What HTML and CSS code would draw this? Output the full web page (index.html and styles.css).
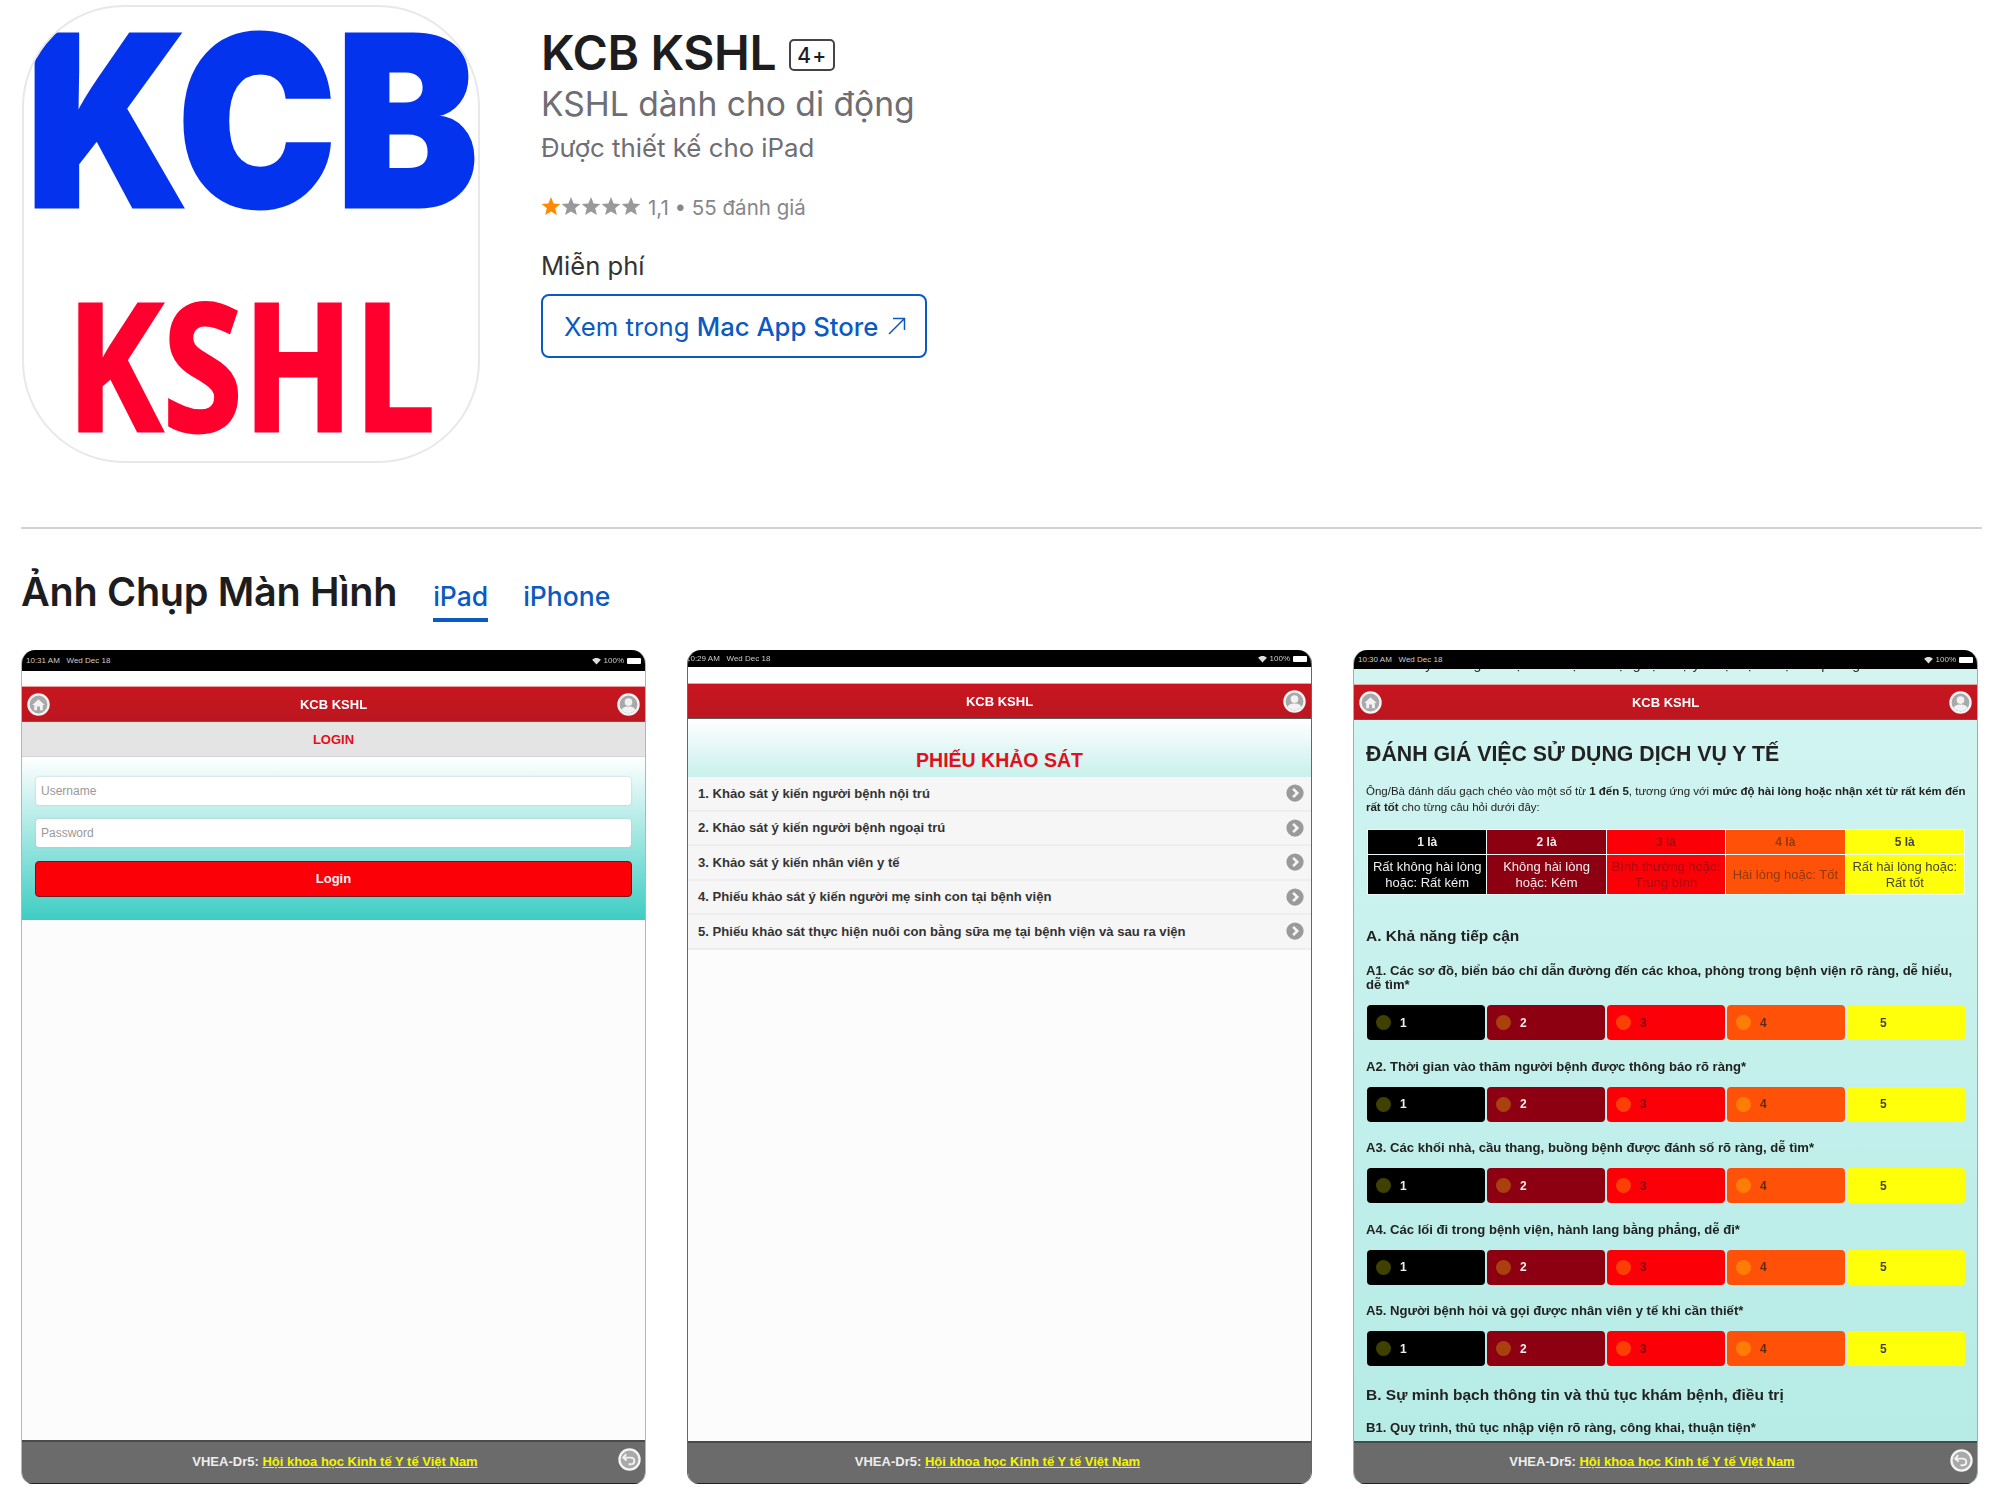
FILE: index.html
```html
<!DOCTYPE html>
<html lang="vi">
<head>
    <meta charset="UTF-8">
    <title>KCB KSHL</title>
    <link rel="stylesheet" href="styles.css">
</head>
<body>
    <svg class="sprites" width="0" height="0">
        <symbol id="star" viewBox="0 0 20 20"><polygon points="10,1 12.6,7.4 19.4,7.9 14.2,12.3 15.9,19 10,15.4 4.1,19 5.8,12.3 .6,7.9 7.4,7.4"/></symbol>
        <symbol id="i-home" viewBox="0 0 24 24"><circle cx="12" cy="12" r="10.5" fill="#a9a9a9" stroke="#f4f4f4" stroke-width="2.4"/><path d="M5.5 12.5 12 6.5l6.5 6h-2v5.5h-3v-4h-3v4h-3v-5.5z" fill="#f2f2f2"/></symbol>
        <symbol id="i-user" viewBox="0 0 24 24"><circle cx="12" cy="12" r="10.5" fill="#a9a9a9" stroke="#f4f4f4" stroke-width="2.4"/><circle cx="12" cy="9.5" r="4" fill="#f2f2f2"/><path d="M4.5 17.5c2-3 5-3.5 7.5-3.5s5.5.5 7.5 3.5c-2 2.5-5 3.5-7.5 3.5s-5.5-1-7.5-3.5z" fill="#f2f2f2"/></symbol>
        <symbol id="i-back" viewBox="0 0 24 24"><circle cx="12" cy="12" r="10.5" fill="#a9a9a9" stroke="#f4f4f4" stroke-width="2.4"/><path d="M8.5 6.5 5.5 10l3.5 3M6 10h7c2.5 0 4 1.5 4 3.500S15.500 17 13 17h-2" fill="none" stroke="#f2f2f2" stroke-width="2"/></symbol>
        <symbol id="i-next" viewBox="0 0 24 24"><circle cx="12" cy="12" r="11.5" fill="#9a9a9a"/><path d="M9.5 6.5 15 12l-5.5 5.5" fill="none" stroke="#f4f4f4" stroke-width="3.5"/></symbol>
        <symbol id="i-wifi" viewBox="0 0 11 10"><path d="M0 3.5c3-3 8-3 11 0L5.5 9.5z" fill="#ddd"/></symbol>
    </svg>

    <div class="page">
        <header class="product">
            <svg class="app-icon" viewBox="0 0 458 458" role="img">
                <text class="logo-top" x="2" y="202" textLength="456" lengthAdjust="spacingAndGlyphs">KCB</text>
                <text class="logo-bottom" x="43" y="428" textLength="372" lengthAdjust="spacingAndGlyphs">KSHL</text>
            </svg>
            <div class="product-info">
                <h1 class="app-title">KCB KSHL <span class="age">4+</span></h1>
                <p class="app-sub">KSHL dành cho di động</p>
                <p class="app-device">Được thiết kế cho iPad</p>
                <div class="rating">
                    <span class="stars">
                        <svg class="star on"><use href="#star"/></svg>
                        <svg class="star"><use href="#star"/></svg>
                        <svg class="star"><use href="#star"/></svg>
                        <svg class="star"><use href="#star"/></svg>
                        <svg class="star"><use href="#star"/></svg>
                    </span>
                    <span>1,1 • 55 đánh giá</span>
                </div>
                <p class="price">Miễn phí</p>
                <a class="store-btn" href="#"><span>Xem trong <span class="store-name">Mac App Store</span></span>
                    <svg class="store-arrow" viewBox="0 0 20 20"><path d="M2 18 17 3M6 2.5h11.5V14" fill="none" stroke="currentColor" stroke-width="1.5"/></svg>
                </a>
            </div>
        </header>

        <section class="shots">
            <div class="shots-head">
                <h2>Ảnh Chụp Màn Hình</h2>
                <a class="tab active" href="#">iPad</a>
                <a class="tab" href="#">iPhone</a>
            </div>

            <div class="shot-grid">
                <!-- login -->
                <div class="shot shot-login">
                    <div class="status"><span>10:31 AM &nbsp; Wed Dec 18</span><span class="status-right"><svg class="wifi"><use href="#i-wifi"/></svg>100%<i class="battery"></i></span></div>
                    <div class="gap"></div>
                    <div class="bar"><svg class="round"><use href="#i-home"/></svg><b>KCB KSHL</b><svg class="round"><use href="#i-user"/></svg></div>
                    <div class="login-title">LOGIN</div>
                    <div class="login-form">
                        <div class="field">Username</div>
                        <div class="field">Password</div>
                        <div class="login-btn">Login</div>
                    </div>
                    <div class="blank"></div>
                    <div class="foot"><span>VHEA-Dr5: <u>Hội khoa học Kinh tế Y tế Việt Nam</u></span><svg class="round"><use href="#i-back"/></svg></div>
                </div>

                <!-- survey list -->
                <div class="shot shot-list">
                    <div class="status status-short"><span>10:29 AM &nbsp; Wed Dec 18</span><span class="status-right"><svg class="wifi"><use href="#i-wifi"/></svg>100%<i class="battery"></i></span></div>
                    <div class="gap gap-list"></div>
                    <div class="bar"><span class="round"></span><b>KCB KSHL</b><svg class="round"><use href="#i-user"/></svg></div>
                    <div class="list-title">PHIẾU KHẢO SÁT</div>
                    <ul class="survey-list">
                        <li>1. Khảo sát ý kiến người bệnh nội trú<svg class="next"><use href="#i-next"/></svg></li>
                        <li>2. Khảo sát ý kiến người bệnh ngoại trú<svg class="next"><use href="#i-next"/></svg></li>
                        <li>3. Khảo sát ý kiến nhân viên y tế<svg class="next"><use href="#i-next"/></svg></li>
                        <li>4. Phiếu khảo sát ý kiến người mẹ sinh con tại bệnh viện<svg class="next"><use href="#i-next"/></svg></li>
                        <li>5. Phiếu khảo sát thực hiện nuôi con bằng sữa mẹ tại bệnh viện và sau ra viện<svg class="next"><use href="#i-next"/></svg></li>
                    </ul>
                    <div class="blank"></div>
                    <div class="foot foot-short"><span>VHEA-Dr5: <u>Hội khoa học Kinh tế Y tế Việt Nam</u></span></div>
                </div>

                <!-- questionnaire -->
                <div class="shot shot-form">
                    <div class="status status-tall"><span>10:30 AM &nbsp; Wed Dec 18</span><span class="status-right"><svg class="wifi"><use href="#i-wifi"/></svg>100%<i class="battery"></i></span></div>
                    <div class="gap gap-clip"><span>Khảo sát ý kiến người bệnh về việc sử dụng dịch vụ y tế tại bệnh viện và phòng khám</span></div>
                    <div class="bar"><svg class="round"><use href="#i-home"/></svg><b>KCB KSHL</b><svg class="round"><use href="#i-user"/></svg></div>
                    <div class="form-body">
                        <h3 class="form-title">ĐÁNH GIÁ VIỆC SỬ DỤNG DỊCH VỤ Y TẾ</h3>
                        <p class="form-note">Ông/Bà đánh dấu gạch chéo vào một số từ <b>1 đến 5</b>, tương ứng với <b>mức độ hài lòng hoặc nhận xét từ rất kém đến</b><br><b>rất tốt</b> cho từng câu hỏi dưới đây:</p>
                        <table class="scale">
                            <tr class="scale-head">
                                <th class="c1">1 là</th><th class="c2">2 là</th><th class="c3">3 là</th><th class="c4">4 là</th><th class="c5">5 là</th>
                            </tr>
                            <tr>
                                <td class="c1">Rất không hài lòng hoặc: Rất kém</td>
                                <td class="c2">Không hài lòng hoặc: Kém</td>
                                <td class="c3">Bình thường hoặc: Trung bình</td>
                                <td class="c4">Hài lòng hoặc: Tốt</td>
                                <td class="c5">Rất hài lòng hoặc: Rất tốt</td>
                            </tr>
                        </table>

                        <h4 class="group">A. Khả năng tiếp cận</h4>
                        <p class="q q-first">A1. Các sơ đồ, biển báo chỉ dẫn đường đến các khoa, phòng trong bệnh viện rõ ràng, dễ hiểu, dễ tìm*</p>
                        <div class="opts">
                            <div class="opt c1"><i></i>1</div><div class="opt c2"><i></i>2</div><div class="opt c3"><i></i>3</div><div class="opt c4"><i></i>4</div><div class="opt c5"><i></i>5</div>
                        </div>
                        <p class="q">A2. Thời gian vào thăm người bệnh được thông báo rõ ràng*</p>
                        <div class="opts">
                            <div class="opt c1"><i></i>1</div><div class="opt c2"><i></i>2</div><div class="opt c3"><i></i>3</div><div class="opt c4"><i></i>4</div><div class="opt c5"><i></i>5</div>
                        </div>
                        <p class="q">A3. Các khối nhà, cầu thang, buồng bệnh được đánh số rõ ràng, dễ tìm*</p>
                        <div class="opts">
                            <div class="opt c1"><i></i>1</div><div class="opt c2"><i></i>2</div><div class="opt c3"><i></i>3</div><div class="opt c4"><i></i>4</div><div class="opt c5"><i></i>5</div>
                        </div>
                        <p class="q">A4. Các lối đi trong bệnh viện, hành lang bằng phẳng, dễ đi*</p>
                        <div class="opts">
                            <div class="opt c1"><i></i>1</div><div class="opt c2"><i></i>2</div><div class="opt c3"><i></i>3</div><div class="opt c4"><i></i>4</div><div class="opt c5"><i></i>5</div>
                        </div>
                        <p class="q">A5. Người bệnh hỏi và gọi được nhân viên y tế khi cần thiết*</p>
                        <div class="opts">
                            <div class="opt c1"><i></i>1</div><div class="opt c2"><i></i>2</div><div class="opt c3"><i></i>3</div><div class="opt c4"><i></i>4</div><div class="opt c5"><i></i>5</div>
                        </div>

                        <h4 class="group group-b">B. Sự minh bạch thông tin và thủ tục khám bệnh, điều trị</h4>
                        <p class="q q-b">B1. Quy trình, thủ tục nhập viện rõ ràng, công khai, thuận tiện*</p>
                    </div>
                    <div class="foot foot-short"><span>VHEA-Dr5: <u>Hội khoa học Kinh tế Y tế Việt Nam</u></span><svg class="round"><use href="#i-back"/></svg></div>
                </div>
            </div>
        </section>
    </div>
</body>
</html>
```

FILE: styles.css
```css
body {
    font-family: Inter, "Noto Sans", sans-serif;
    background-color: #fff;
    color: #1d1d1f;
    margin: 0;
    padding: 0;
}
h1, h2, h3, h4, p, ul {
    margin: 0;
    padding: 0;
}
a {
    text-decoration: none;
}
.sprites {
    display: block;
    height: 0;
}
.page {
    width: 1961px;
    margin-left: 21px;
    height: 1502px;
    overflow: hidden;
}

/* product header */
.product {
    display: flex;
    height: 522px;
    border-bottom: 2px solid #d2d2d2;
    padding-top: 5px;
}
.app-icon {
    width: 458px;
    height: 458px;
    margin-left: 1px;
    border: 2px solid #e8e8e8;
    border-radius: 102px;
    box-sizing: border-box;
    flex-shrink: 0;
    overflow: hidden;
}
.logo-top {
    font-family: Inter, sans-serif;
    font-weight: 900;
    font-size: 240px;
    fill: #0433ee;
    stroke: #0433ee;
    stroke-width: 3px;
}
.logo-bottom {
    font-family: "Open Sans", sans-serif;
    font-weight: 700;
    font-size: 180px;
    fill: #ff002e;
    stroke: #ff002e;
    stroke-width: 3px;
}
.product-info {
    margin-left: 61px;
}
.app-title {
    display: flex;
    align-items: center;
    font-size: 48px;
    font-weight: 600;
    line-height: 60px;
    margin-top: 18px;
    letter-spacing: -.4px;
}
.age {
    font-size: 21px;
    font-weight: 500;
    letter-spacing: 1px;
    border: 2px solid #444;
    border-radius: 5px;
    width: 46px;
    height: 32px;
    line-height: 30px;
    text-align: center;
    box-sizing: border-box;
    margin-left: 13px;
    margin-top: 4px;
}
.app-sub {
    font-size: 33.6px;
    font-weight: 400;
    line-height: 44px;
    color: #6e6e73;
    margin-top: -1px;
}
.app-device {
    font-size: 25.8px;
    line-height: 36px;
    color: #6e6e73;
    margin-top: 4px;
}
.rating {
    display: flex;
    align-items: center;
    gap: 7px;
    font-size: 20.5px;
    line-height: 28px;
    color: #86868b;
    margin-top: 28px;
}
.stars {
    display: flex;
    margin-top: -4px;
}
.star {
    width: 20px;
    height: 20px;
    fill: #98989d;
}
.star.on {
    fill: #ff8a00;
}
.price {
    font-size: 25.6px;
    line-height: 36px;
    margin-top: 26px;
    color: #333;
}
.store-btn {
    display: flex;
    align-items: center;
    gap: 9px;
    width: 386px;
    height: 64px;
    margin-top: 10px;
    padding-left: 21px;
    border: 2px solid #0a5ac2;
    border-radius: 8px;
    box-sizing: border-box;
    font-size: 25.7px;
    color: #0a5ac2;
}
.store-name {
    font-weight: 500;
}
.store-arrow {
    width: 20px;
    height: 20px;
}

/* screenshots */
.shots-head {
    display: flex;
    align-items: baseline;
    height: 121px;
    padding-top: 34px;
    box-sizing: border-box;
}
.shots-head h2 {
    font-size: 39.6px;
    font-weight: 600;
    line-height: 58px;
    letter-spacing: -.3px;
    margin-right: 36px;
}
.tab {
    font-size: 26.5px;
    font-weight: 500;
    color: #0a5ac2;
    margin-right: 35px;
    padding-bottom: 6px;
}
.tab.active {
    border-bottom: 4px solid #0a5ac2;
}
.shot-grid {
    display: grid;
    grid-template-columns: 625px 625px 625px;
    column-gap: 41px;
}
.shot {
    display: flex;
    flex-direction: column;
    height: 834px;
    border-radius: 14px 14px 12px 12px;
    border-left: 1px solid #b5b5b5;
    border-right: 1px solid #b5b5b5;
    box-sizing: border-box;
    overflow: hidden;
    font-family: "Liberation Sans", Arial, sans-serif;
    filter: blur(.4px);
}
.status {
    display: flex;
    justify-content: space-between;
    align-items: center;
    height: 21px;
    flex-shrink: 0;
    padding: 0 4px;
    background-color: #000;
    color: #ccc;
    font-size: 8px;
}
.status-short {
    height: 17px;
    padding-left: 0;
}
.status-short span:first-child {
    margin-left: -2px;
}
.status-tall {
    height: 19px;
}
.status-right {
    display: flex;
    align-items: center;
    gap: 3px;
}
.wifi {
    display: block;
    width: 9px;
    height: 8px;
}
.battery {
    display: block;
    width: 14px;
    height: 6px;
    background-color: #fff;
    border-radius: 1px;
}
.gap {
    height: 15px;
    flex-shrink: 0;
    background-color: #fff;
}
.gap-list {
    height: 16px;
}
.gap-clip {
    background-color: #d3f4f1;
    overflow: hidden;
    padding-left: 12px;
    font-size: 14px;
    line-height: 14px;
    white-space: nowrap;
    color: #333;
}
.gap-clip span {
    display: block;
    margin-top: -12px;
}
.bar {
    display: flex;
    justify-content: space-between;
    align-items: center;
    height: 36px;
    flex-shrink: 0;
    padding: 0 5px;
    background: linear-gradient(#c8161f, #bc1620);
    border-bottom: 1px solid #5c5c5c;
    border-top: 1px solid #e8a0a0;
    box-sizing: border-box;
    color: #fff;
    font-size: 13px;
}
.round {
    display: block;
    width: 23px;
    height: 23px;
}
.login-title {
    height: 35px;
    flex-shrink: 0;
    background-color: #e4e4e4;
    border-bottom: 1px solid #d4d4d4;
    box-sizing: border-box;
    text-align: center;
    line-height: 35px;
    font-size: 13px;
    font-weight: bold;
    color: #e0101c;
}
.login-form {
    height: 163px;
    flex-shrink: 0;
    padding: 20px 13px 0;
    box-sizing: border-box;
    background: linear-gradient(#fff, #3ecdc3);
}
.field {
    height: 28px;
    margin: 0 1px 14px;
    padding-left: 5px;
    background-color: #fff;
    border-radius: 3px;
    box-shadow: 0 0 2px #bbb;
    font-size: 12px;
    line-height: 28px;
    color: #999;
}
.login-btn {
    height: 36px;
    margin-top: 12px;
    background-color: #fb0007;
    border: 1px solid #75141a;
    border-radius: 4px;
    box-sizing: border-box;
    text-align: center;
    line-height: 33px;
    font-size: 13px;
    font-weight: bold;
    color: #f4f4f4;
}
.blank {
    flex: 1;
    background-color: #fcfcfc;
}
.foot {
    display: flex;
    justify-content: center;
    align-items: center;
    height: 44px;
    flex-shrink: 0;
    padding: 0 4px 0 30px;
    background-color: #6b6b6b;
    border-top: 2px solid #4a4a4a;
    border-bottom: 1px solid #222;
    box-sizing: border-box;
    color: #eee;
    font-size: 13px;
    font-weight: bold;
}
.foot span {
    flex: 1;
    text-align: center;
    padding-bottom: 3px;
}
.foot u {
    color: #f4f400;
}
.foot .round {
    margin-top: -6px;
}
.foot-short {
    height: 43px;
    padding: 0 4px 0 0;
}
.list-title {
    height: 58px;
    flex-shrink: 0;
    box-sizing: border-box;
    padding-top: 28px;
    background: linear-gradient(#fff, #c8f0ec);
    text-align: center;
    line-height: 26px;
    font-size: 19.5px;
    font-weight: bold;
    color: #e0101c;
}
.survey-list {
    list-style: none;
    flex-shrink: 0;
}
.survey-list li {
    display: flex;
    justify-content: space-between;
    align-items: center;
    height: 34.5px;
    padding: 0 7px 0 10px;
    box-sizing: border-box;
    background-color: #f6f6f6;
    border-bottom: 2px solid #eee;
    font-size: 13.1px;
    font-weight: bold;
    color: #333;
}
.next {
    display: block;
    width: 18px;
    height: 18px;
}
.shot-list {
    border-color: #666;
}
.shot-form {
    border-color: #8fb4b2;
}
.form-body {
    flex: 1;
    min-height: 0;
    overflow: hidden;
    padding: 22px 12px 0 13px;
    background: linear-gradient(#d0f4f1, #b6ebe6);
    color: #222;
}
.form-title {
    font-size: 21.3px;
    font-weight: bold;
    line-height: 24px;
    margin-left: -1px;
}
.form-note {
    font-size: 11.5px;
    line-height: 16px;
    margin: 17px 0 0 -1px;
    white-space: nowrap;
}
.scale {
    width: 598px;
    height: 66px;
    margin-top: 14px;
    table-layout: fixed;
    border-collapse: collapse;
    text-align: center;
    font-size: 13px;
}
.scale th, .scale td {
    border: 1px solid #e8f8f6;
    padding: 0 3px;
    line-height: 16px;
    font-weight: normal;
}
.scale th {
    font-weight: bold;
    font-size: 12px;
    height: 24px;
}
.c1 {
    background-color: #000;
    color: #eee;
}
.c2 {
    background-color: #8d0012;
    color: #eee;
}
.c3 {
    background-color: #fb0007;
    color: #a80a10;
}
.c4 {
    background-color: #ff5208;
    color: #8d3a10;
}
.c5 {
    background-color: #ffff0a;
    color: #444;
}
.group {
    font-size: 15.5px;
    font-weight: bold;
    line-height: 20px;
    margin: 31px 0 0 -1px;
}
.q {
    font-size: 13.1px;
    font-weight: bold;
    line-height: 14px;
    margin: 19.5px 0 0 -1px;
}
.q-first {
    margin-top: 18px;
}
.opts {
    display: grid;
    grid-template-columns: repeat(5, 118px);
    column-gap: 2px;
    margin-top: 13px;
}
.opt {
    display: flex;
    align-items: center;
    height: 35px;
    padding-left: 9px;
    border-radius: 4px;
    font-size: 12px;
    font-weight: bold;
}
.opt i {
    width: 15px;
    height: 15px;
    border-radius: 50%;
    margin-right: 9px;
    background-color: rgba(255, 255, 0, .25);
}
.opt.c3 {
    color: #7a0a10;
}
.opt.c4 {
    color: #5e2a10;
}
.opt.c5 i {
    background-color: transparent;
}
.group-b {
    margin-top: 19px;
}
.q-b {
    margin-top: 16px;
}
```
